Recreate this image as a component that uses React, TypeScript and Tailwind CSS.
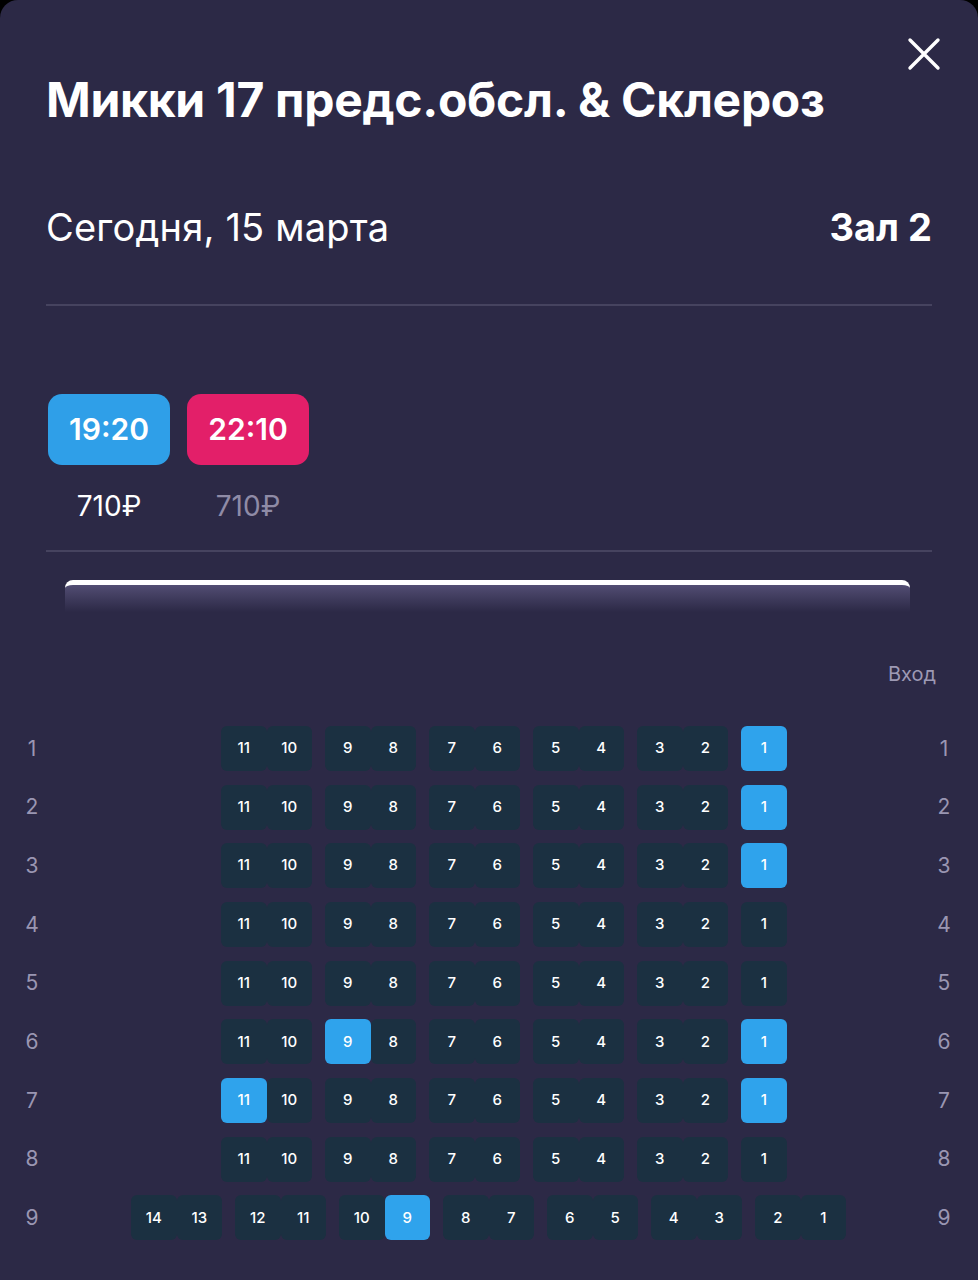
import React from 'react';

type Seat = { n: number; sel?: boolean };

const rowsStd: number[][] = [
  [11, 10],
  [9, 8],
  [7, 6],
  [5, 4],
  [3, 2],
  [1],
];

const row9: number[][] = [
  [14, 13],
  [12, 11],
  [10, 9],
  [8, 7],
  [6, 5],
  [4, 3],
  [2, 1],
];

// selected seats per row
const selected: Record<number, number[]> = {
  1: [1],
  2: [1],
  3: [1],
  6: [9, 1],
  7: [11, 1],
  9: [9],
};

const SeatCell: React.FC<{ seat: Seat }> = ({ seat }) => (
  <div
    className={`w-[45.5px] h-[45px] flex items-center justify-center rounded-[6px] text-[15px] font-medium text-white ${
      seat.sel ? 'bg-[#2fa3ec]' : 'bg-[#1b3041]'
    }`}
  >
    {seat.n}
  </div>
);

const SeatRow: React.FC<{ row: number }> = ({ row }) => {
  const groups = row === 9 ? row9 : rowsStd;
  const sel = selected[row] || [];
  return (
    <div className="grid grid-cols-[64px_1fr_68px] items-center h-[58.7px]">
      <div className="text-center text-[21px] text-[#9a96b2]">{row}</div>
      <div className={`flex gap-[13px] ${row === 9 ? 'ml-[67px]' : 'ml-[157px]'}`}>
        {groups.map((g, i) => (
          <div key={i} className="flex">
            {g.map((n) => (
              <SeatCell key={n} seat={{ n, sel: sel.includes(n) }} />
            ))}
          </div>
        ))}
      </div>
      <div className="text-center text-[21px] text-[#9a96b2]">{row}</div>
    </div>
  );
};

export default function App() {
  return (
    <div className="bg-black w-[978px] h-[1280px] font-['Inter','Noto_Sans',sans-serif]">
      <div className="relative h-[1280px] rounded-t-[18px] bg-[#2c2946] overflow-hidden">
        {/* Close */}
        <button className="absolute top-[37px] right-[37px] w-[34px] h-[34px]">
          <svg viewBox="0 0 34 34" className="w-[34px] h-[34px]">
            <path d="M3 3 L31 31 M31 3 L3 31" stroke="white" strokeWidth="3.4" strokeLinecap="round" />
          </svg>
        </button>

        <div className="px-[46px]">
          <h1 className="pt-[70px] text-[48px] leading-[60px] font-bold text-white tracking-[-0.3px]">
            Микки 17 предс.обсл. &amp; Склероз
          </h1>

          <div className="flex items-center justify-between mt-[75px] h-[44px]">
            <span className="text-[38px] text-white tracking-[0.2px]">Сегодня, 15 марта</span>
            <span className="text-[38px] font-bold text-white">Зал 2</span>
          </div>

          <div className="mt-[55px] h-[2px] bg-[#46435f]" />

          {/* Sessions */}
          <div className="flex gap-[17px] mt-[88px] ml-[2px]">
            <div className="flex flex-col items-center">
              <div className="w-[122px] h-[71px] rounded-[14px] bg-[#2f9fe8] flex items-center justify-center text-[30px] font-semibold text-white">
                19:20
              </div>
              <div className="mt-[20px] text-[28px] text-white">710₽</div>
            </div>
            <div className="flex flex-col items-center">
              <div className="w-[122px] h-[71px] rounded-[14px] bg-[#e31f69] flex items-center justify-center text-[30px] font-semibold text-white">
                22:10
              </div>
              <div className="mt-[20px] text-[28px] text-[#8f8ba6]">710₽</div>
            </div>
          </div>

          <div className="mt-[23px] h-[2px] bg-[#46435f]" />
        </div>

        {/* Screen */}
        <div className="mx-[65px] w-[845px] mt-[28px] h-[32px] rounded-t-[8px] border-t-[5px] border-white bg-gradient-to-b from-[#524d73] to-[#2c2946]" />

        <div className="flex justify-end pr-[42px] mt-[47px] text-[20px] text-[#9d99b4]">Вход</div>

        <div className="mt-[30px]">
          {[1, 2, 3, 4, 5, 6, 7, 8, 9].map((r) => (
            <SeatRow key={r} row={r} />
          ))}
        </div>
      </div>
    </div>
  );
}
